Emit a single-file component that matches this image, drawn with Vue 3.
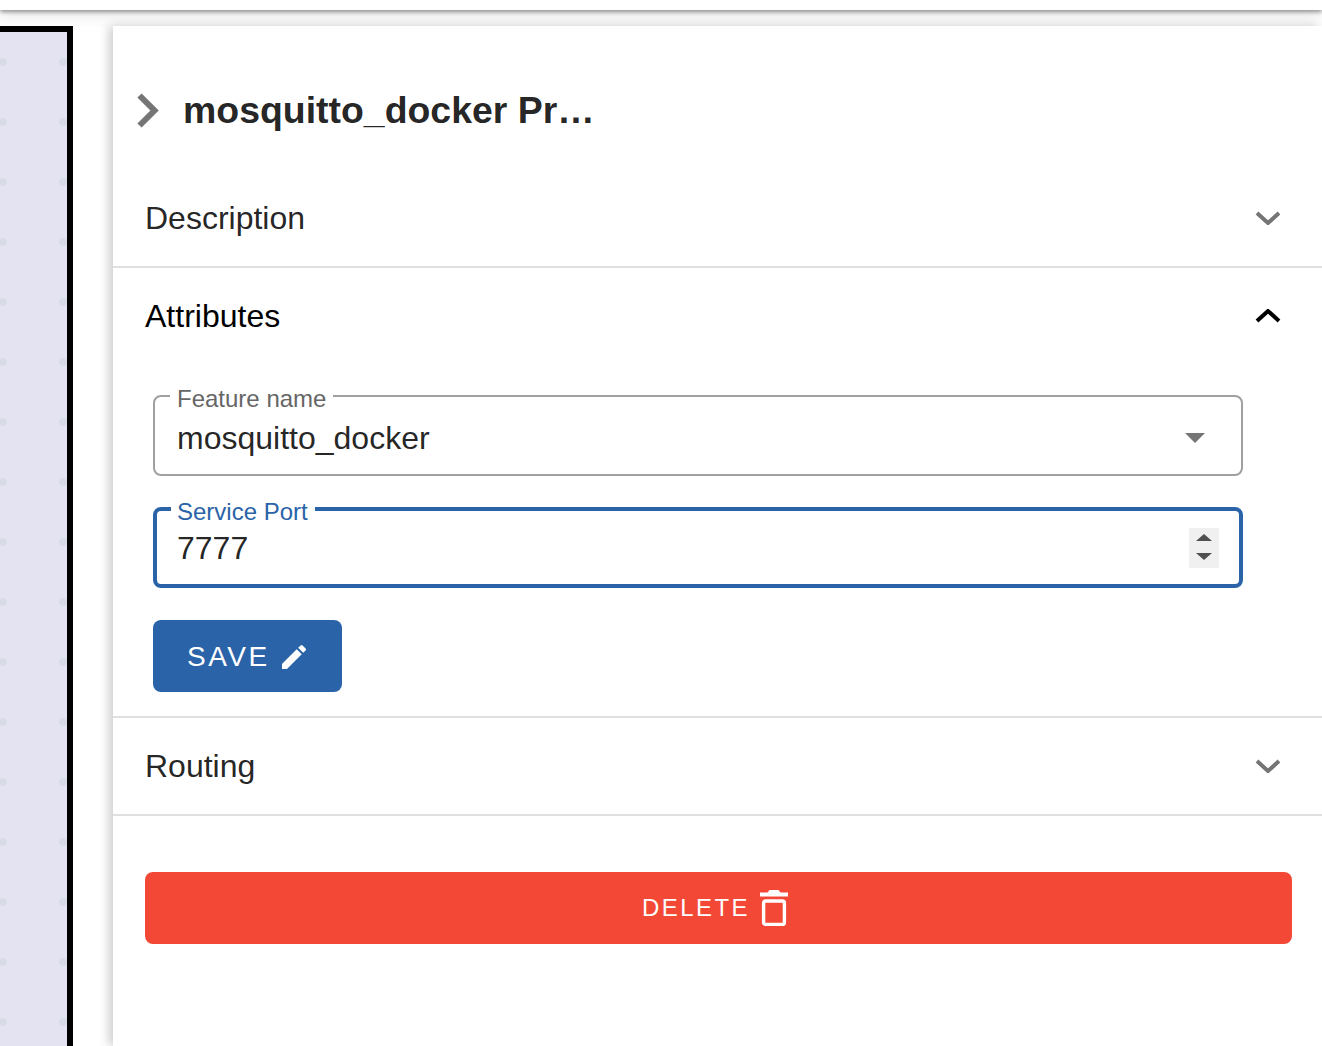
<script setup>
import { ref } from 'vue';
const featureName = ref('mosquitto_docker');
const servicePort = ref('7777');
</script>

<template>
  <div class="page">
    <div class="topbar"></div>
    <div class="main">
      <div class="canvas"></div>
      <aside class="panel">
        <div class="panel-head">
          <svg class="head-chevron" width="24" height="36" viewBox="0 0 24 36">
            <path d="M3.5 3.5 L18.5 18.5 L3.5 33.5" fill="none" stroke="#757575" stroke-width="6" />
          </svg>
          <h2>mosquitto_docker Pr…</h2>
        </div>

        <div class="section">
          <div class="section-head">
            <span>Description</span>
            <svg class="chev" width="26" height="14" viewBox="0 0 26 14">
              <path d="M2 2 L13 12 L24 2" fill="none" stroke="#757575" stroke-width="4" />
            </svg>
          </div>
        </div>

        <div class="section">
          <div class="section-head open">
            <span>Attributes</span>
            <svg class="chev" width="26" height="14" viewBox="0 0 26 14">
              <path d="M2 12 L13 2 L24 12" fill="none" stroke="#000" stroke-width="4" />
            </svg>
          </div>
          <div class="section-body">
            <div class="field">
              <fieldset class="outline"><legend><span>Feature name</span></legend></fieldset>
              <span class="value">{{ featureName }}</span>
              <span class="caret"></span>
            </div>
            <div class="field focused">
              <fieldset class="outline"><legend><span>Service Port</span></legend></fieldset>
              <span class="value">{{ servicePort }}</span>
              <span class="spinner">
                <svg width="30" height="40" viewBox="0 0 30 40">
                  <rect width="30" height="40" fill="#f0f0f0" />
                  <path d="M7 13 L15 6 L23 13 Z M7 25 L23 25 L15 32 Z" fill="#505050" />
                </svg>
              </span>
            </div>
            <button class="btn save">
              SAVE
              <svg width="32" height="32" viewBox="0 0 24 24">
                <path fill="#fff" d="M3 17.25V21h3.75L17.81 9.94l-3.75-3.75L3 17.25zM20.71 7.04c.39-.39.39-1.02 0-1.41l-2.34-2.34a.996.996 0 0 0-1.41 0l-1.83 1.83 3.75 3.75 1.83-1.83z" />
              </svg>
            </button>
          </div>
        </div>

        <div class="section">
          <div class="section-head">
            <span>Routing</span>
            <svg class="chev" width="26" height="14" viewBox="0 0 26 14">
              <path d="M2 2 L13 12 L24 2" fill="none" stroke="#757575" stroke-width="4" />
            </svg>
          </div>
        </div>

        <button class="btn delete">
          DELETE
          <svg width="28" height="38" viewBox="0 0 28 38">
            <path fill="#fff" d="M0 3.4h7.5L9.5 1h9l2 2.4H28v4H0z" />
            <rect x="3.6" y="12" width="20.8" height="23.4" rx="2" fill="none" stroke="#fff" stroke-width="3.4" />
          </svg>
        </button>
      </aside>
    </div>
  </div>
</template>

<style>
html, body {
  margin: 0;
  background: #fff;
}
</style>

<style scoped>
.page {
  height: 1046px;
  overflow: hidden;
  font-family: "Liberation Sans", Arial, sans-serif;
  color: rgba(0, 0, 0, 0.87);
}

.topbar {
  height: 10px;
  background: #fff;
  box-shadow: 0 2px 4px rgba(0, 0, 0, 0.4), 0 4px 16px rgba(0, 0, 0, 0.14);
  position: relative;
}

.main {
  display: flex;
  gap: 40px;
  margin-top: 16px;
  height: 1020px;
}

.canvas {
  width: 67px;
  flex: none;
  box-sizing: content-box;
  border-top: 6px solid #000;
  border-right: 6px solid #000;
  background-color: #e4e3f2;
  background-image: radial-gradient(circle, #d6dbe6 3.6px, transparent 4px);
  background-size: 60px 60px;
  background-position: -27px 0px;
}

.panel {
  flex: 1;
  min-width: 0;
  background: #fff;
  box-shadow: -4px 0 10px rgba(0, 0, 0, 0.2);
  position: relative;
}

.panel-head {
  display: flex;
  align-items: center;
  height: 120px;
  padding: 24px 0 0 23px;
  gap: 23px;
}

.panel-head h2 {
  margin: 0;
  font-size: 37.44px;
  font-weight: 700;
}

.head-chevron {
  flex: none;
}

.section {
  border-bottom: 2px solid #e0e0e0;
}

.section-head {
  display: flex;
  align-items: center;
  justify-content: space-between;
  height: 96px;
  padding: 0 41px 0 32px;
  font-size: 32px;
}

.section-head.open {
  color: #000;
}

.section-body {
  padding: 32px 79px 24px 40px;
}

.field {
  position: relative;
  display: flex;
  align-items: center;
  justify-content: space-between;
  height: 80px;
  box-sizing: border-box;
  padding: 4px 24px 0 24px;
  margin-bottom: 32px;
  font-size: 32px;
}

.outline {
  position: absolute;
  inset: -8px 0 0 0;
  margin: 0;
  padding: 0 15px;
  border: 2px solid #a0a0a0;
  border-radius: 8px;
  pointer-events: none;
}

.outline legend {
  padding: 0 7px;
  font-size: 24px;
  line-height: 16px;
  color: #666;
}

.outline legend span {
  position: relative;
  top: 3px;
}

.focused {
  padding-top: 0;
}

.focused .outline {
  top: -7px;
  border: 4px solid #2a63a8;
  padding: 0 14px;
}

.focused .outline legend {
  padding-left: 6px;
  color: #2a63a8;
}

.value {
  position: relative;
}

.caret {
  width: 0;
  height: 0;
  border-left: 10px solid transparent;
  border-right: 10px solid transparent;
  border-top: 10px solid #757575;
  margin-right: 14px;
}

.spinner {
  display: flex;
  position: relative;
}

.btn {
  display: flex;
  align-items: center;
  border: none;
  border-radius: 8px;
  color: #fff;
  font-family: inherit;
  height: 72px;
}

.save {
  width: 189px;
  padding: 1px 0 0 34px;
  gap: 8px;
  background: #2a63a8;
  font-size: 28px;
  letter-spacing: 2.5px;
}

.delete {
  justify-content: center;
  width: 1147px;
  margin: 56px 0 0 32px;
  gap: 10px;
  padding: 0 7px 0 0;
  background: #f44836;
  font-size: 24px;
  letter-spacing: 2.4px;
}
</style>
